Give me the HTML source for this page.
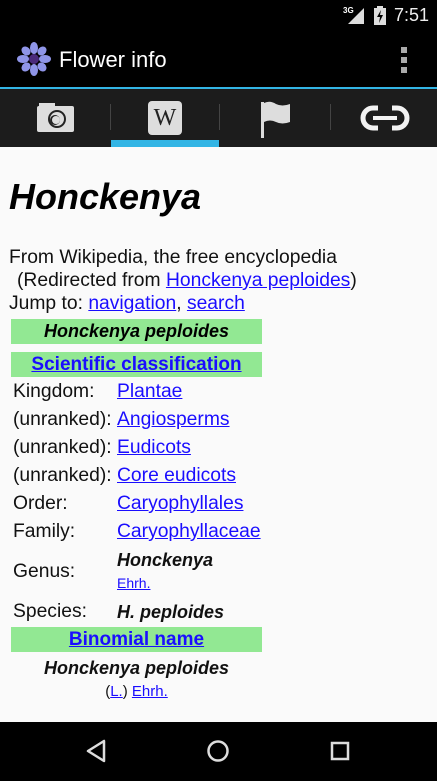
<!DOCTYPE html><html><head><style>
body{margin:0;width:437px;height:781px;position:relative;background:#fafafa;font-family:"Liberation Sans",sans-serif;overflow:hidden}
.a{position:absolute;white-space:nowrap}
a{color:#1a0dff;text-decoration:underline}
.t{font-size:19.3px;color:#111;line-height:22px}
.g{position:absolute;left:11px;width:251px;height:25px;background:#92e893;text-align:center;font:bold italic 18px/25px "Liberation Sans",sans-serif}
</style></head><body>
<div class="a" style="left:0;top:0;width:437px;height:30px;background:#000"></div>
<div class="a" style="left:343px;top:6px;color:#fff;font-size:8px;font-weight:bold">3G</div>
<svg class="a" style="left:348px;top:8px" width="16" height="16"><polygon points="16,0 16,16 0,16" fill="#ddd"/></svg>
<svg class="a" style="left:374px;top:6px" width="12" height="19"><rect x="3" y="0" width="6" height="3" fill="#ddd"/><rect x="0" y="2" width="12" height="17" fill="#ddd"/><polygon points="7,4 3,11 6,11 5,17 9,9 6,9" fill="#000"/></svg>
<div class="a" style="left:394px;top:5px;color:#eee;font-size:18px">7:51</div>
<div class="a" style="left:0;top:30px;width:437px;height:57px;background:#000"></div>
<svg class="a" style="left:17px;top:42px" width="34" height="34" viewBox="0 0 34 34"><g fill="#8f95e8"><ellipse cx="17" cy="6" rx="4" ry="6"/><ellipse cx="17" cy="28" rx="4" ry="6"/><ellipse cx="6" cy="17" rx="6" ry="4"/><ellipse cx="28" cy="17" rx="6" ry="4"/><ellipse cx="9" cy="9" rx="4" ry="5" transform="rotate(-45 9 9)"/><ellipse cx="25" cy="25" rx="4" ry="5" transform="rotate(-45 25 25)"/><ellipse cx="25" cy="9" rx="4" ry="5" transform="rotate(45 25 9)"/><ellipse cx="9" cy="25" rx="4" ry="5" transform="rotate(45 9 25)"/></g><circle cx="17" cy="17" r="5" fill="#4a2a7a"/></svg>
<div class="a" style="left:59px;top:47px;color:#fff;font-size:22px">Flower info</div>
<div class="a" style="left:401px;top:47px;width:6px;height:6px;background:#aaa"></div>
<div class="a" style="left:401px;top:57px;width:6px;height:6px;background:#aaa"></div>
<div class="a" style="left:401px;top:67px;width:6px;height:6px;background:#aaa"></div>
<div class="a" style="left:0;top:87px;width:437px;height:2px;background:#33b5e5"></div>
<div class="a" style="left:0;top:89px;width:437px;height:58px;background:#1c1c1c"></div>
<div class="a" style="left:110px;top:104px;width:1px;height:26px;background:#444"></div>
<div class="a" style="left:219px;top:104px;width:1px;height:26px;background:#444"></div>
<div class="a" style="left:330px;top:104px;width:1px;height:26px;background:#444"></div>
<div class="a" style="left:111px;top:140px;width:108px;height:7px;background:#33b5e5"></div>
<svg class="a" style="left:36px;top:102px" width="39" height="31"><rect x="1" y="4" width="37" height="26" rx="2" fill="#ddd"/><rect x="3" y="1" width="16" height="5" fill="#ddd"/><circle cx="21" cy="17" r="9" fill="#222"/><circle cx="21" cy="17" r="7" fill="#ddd"/><circle cx="19" cy="18" r="5" fill="#222"/><circle cx="20" cy="18" r="4" fill="#ddd"/></svg>
<div class="a" style="left:148px;top:101px;width:34px;height:34px;background:#ddd;border-radius:4px;text-align:center;font:24px/34px 'Liberation Serif',serif;color:#222">W</div>
<svg class="a" style="left:260px;top:100px" width="32" height="38"><rect x="1" y="2" width="3" height="36" fill="#ddd"/><path d="M4 3 Q10 0 16 4 Q22 7 30 4 L30 22 Q22 25 16 22 Q10 19 4 22Z" fill="#ddd"/></svg>
<svg class="a" style="left:360px;top:105px" width="50" height="26"><rect x="3" y="3" width="44" height="20" rx="10" fill="none" stroke="#f2f2f2" stroke-width="5"/><rect x="18" y="0" width="14" height="26" fill="#1c1c1c"/><rect x="13" y="11" width="24" height="4" fill="#f2f2f2"/></svg>
<div class="a" style="left:9px;top:176px;font:bold italic 36px 'Liberation Sans',sans-serif;color:#000">Honckenya</div>
<div class="a t" style="left:9px;top:247px">From Wikipedia, the free encyclopedia</div>
<div class="a t" style="left:17px;top:270px">(Redirected from <a>Honckenya peploides</a>)</div>
<div class="a t" style="left:9px;top:293px">Jump to: <a>navigation</a>, <a>search</a></div>
<div class="g" style="top:319px">Honckenya peploides</div>
<div class="g" style="top:352px;font-size:19px"><a style="font-style:normal">Scientific classification</a></div>
<div class="a t" style="left:13px;top:381px">Kingdom:</div><div class="a t" style="left:117px;top:381px"><a>Plantae</a></div>
<div class="a t" style="left:13px;top:409px">(unranked):</div><div class="a t" style="left:117px;top:409px"><a>Angiosperms</a></div>
<div class="a t" style="left:13px;top:437px">(unranked):</div><div class="a t" style="left:117px;top:437px"><a>Eudicots</a></div>
<div class="a t" style="left:13px;top:465px">(unranked):</div><div class="a t" style="left:117px;top:465px"><a>Core eudicots</a></div>
<div class="a t" style="left:13px;top:493px">Order:</div><div class="a t" style="left:117px;top:493px"><a>Caryophyllales</a></div>
<div class="a t" style="left:13px;top:521px">Family:</div><div class="a t" style="left:117px;top:521px"><a>Caryophyllaceae</a></div>
<div class="a t" style="left:13px;top:561px">Genus:</div><div class="a t" style="left:117px;top:549px;font-weight:bold;font-style:italic;font-size:18px">Honckenya</div>
<div class="a" style="left:117px;top:575px;font-size:14px"><a>Ehrh.</a></div>
<div class="a t" style="left:13px;top:601px">Species:</div><div class="a t" style="left:117px;top:601px;font-weight:bold;font-style:italic;font-size:18px">H. peploides</div>
<div class="g" style="top:627px;font-size:19px"><a style="font-style:normal">Binomial name</a></div>
<div class="a t" style="left:11px;width:251px;text-align:center;top:657px;font-weight:bold;font-style:italic;font-size:18px">Honckenya peploides</div>
<div class="a" style="left:11px;width:251px;text-align:center;top:683px;font-size:15px;color:#111">(<a>L.</a>) <a>Ehrh.</a></div>
<div class="a" style="left:0;top:722px;width:437px;height:59px;background:#000"></div>
<svg class="a" style="left:84px;top:738px" width="24" height="26"><polygon points="20,3 20,23 4,13" fill="none" stroke="#ddd" stroke-width="2.5" stroke-linejoin="round"/></svg>
<svg class="a" style="left:206px;top:739px" width="24" height="24"><circle cx="12" cy="12" r="9.5" fill="none" stroke="#ddd" stroke-width="2.5"/></svg>
<svg class="a" style="left:330px;top:741px" width="20" height="20"><rect x="2" y="2" width="16" height="16" fill="none" stroke="#ddd" stroke-width="2.5"/></svg>
</body></html>
